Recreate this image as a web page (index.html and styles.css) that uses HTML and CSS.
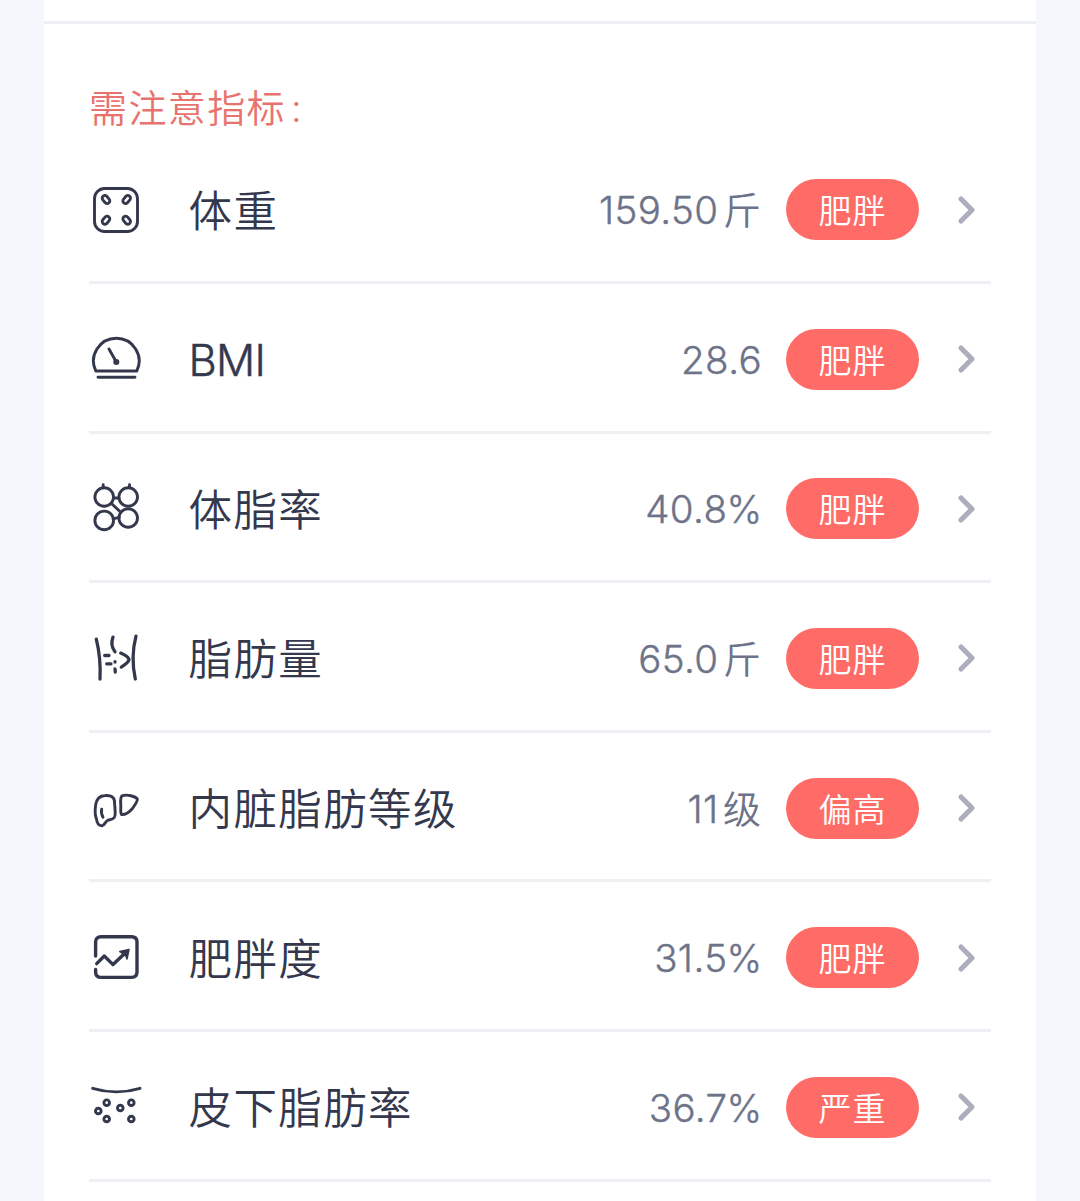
FILE: index.html
```html
<!DOCTYPE html>
<html lang="zh-CN">
<head>
    <meta charset="UTF-8">
    <meta name="viewport" content="width=device-width, initial-scale=1.0">
    <title>需注意指标</title>
    <link rel="stylesheet" href="styles.css">
</head>
<body>
<div class="container">
    <h2 class="title">需注意指标<span class="colon">:</span></h2>
    <ul class="list" id="list"></ul>
</div>

<script src="script.js"></script>
</body>
</html>
```
FILE: styles.css
```css
* {
    box-sizing: border-box;
}
body {
    margin: 0;
    height: 1201px;
    overflow: hidden;
    padding: 21px 44px 0;
    font-family: Inter, "Noto Sans CJK SC", sans-serif;
    background: linear-gradient(to right, #f4f7fc 44px, #ffffff 44px, #ffffff 1036px, #f4f7fc 1036px);
}
.container {
    height: 1180px;
    padding: 0 45px;
    border-top: 3px solid #eeeff3;
}
.title {
    margin: 0;
    padding-top: 55px;
    height: 110.5px;
    font-size: 38px;
    line-height: 58px;
    font-weight: 350;
    letter-spacing: 1.4px;
    color: #e8736e;
}
.colon {
    margin-left: 5px;
}
.list {
    margin: 0;
    padding: 0;
    list-style: none;
}
.item {
    display: flex;
    align-items: center;
    height: 149.6px;
    padding-top: 3.8px;
    border-bottom: 3px solid #eff0f4;
}
.icon {
    width: 54px;
    height: 54px;
    fill: none;
    stroke: #34384d;
    stroke-width: 2.9;
    stroke-linecap: round;
    stroke-linejoin: round;
}
.icon .solid {
    fill: #34384d;
}
.name {
    flex: 1;
    margin-left: 45.5px;
    padding-top: 2px;
    font-size: 43.5px;
    line-height: 60px;
    font-weight: 350;
    letter-spacing: 1.4px;
    color: #34384d;
}
.name.latin {
    font-size: 43.5px;
    font-weight: 300;
    letter-spacing: -0.7px;
    -webkit-text-stroke: 0.5px #34384d;
}
.value {
    display: flex;
    align-items: center;
    margin-right: -1px;
    padding-top: 1px;
    font-size: 38.5px;
    line-height: 58px;
    font-weight: 300;
    letter-spacing: 0.4px;
    color: #6d7389;
    -webkit-text-stroke: 0.4px #6d7389;
}
.unit {
    margin: 0 1px 0 4.5px;
    font-size: 38px;
    font-weight: 350;
    letter-spacing: 0;
    -webkit-text-stroke: 0;
}
.percent {
    margin-left: -1px;
    font-size: 38px;
    letter-spacing: 0;
}
.tag {
    width: 133px;
    height: 61px;
    margin-left: 25px;
    padding-top: 2px;
    border-radius: 31px;
    font-size: 33px;
    line-height: 60px;
    font-weight: 350;
    letter-spacing: 1px;
    text-align: center;
    color: #ffffff;
    background-color: #ff6b66;
}
.arrow {
    width: 20px;
    height: 30px;
    margin: 0 14px 0 38px;
    fill: none;
    stroke: #acaebd;
    stroke-width: 5.2;
    stroke-linecap: round;
    stroke-linejoin: round;
}
```
FILE: script.js
```js
const icons = {
    weight: `<rect x="5.5" y="5.5" width="43" height="43" rx="10"/>
        <rect x="12.6" y="13.8" width="8.8" height="5.4" rx="2.7" transform="rotate(50 17 16.5)"/>
        <rect x="33.3" y="13.8" width="8.8" height="5.4" rx="2.7" transform="rotate(-50 37.7 16.5)"/>
        <rect x="12.6" y="34.5" width="8.8" height="5.4" rx="2.7" transform="rotate(-50 17 37.2)"/>
        <rect x="33.3" y="34.5" width="8.8" height="5.4" rx="2.7" transform="rotate(50 37.7 37.2)"/>`,
    bmi: `<path d="M6.8 39A22.8 22.8 0 1 1 47.8 39ZM9 45.3H46M20 17L27.3 30"/>
        <circle class="solid" cx="27.3" cy="30" r="1.6"/>`,
    fatRate: `<circle cx="15.2" cy="15" r="9.3"/><circle cx="39.2" cy="15" r="9.3"/>
        <circle cx="15.2" cy="38.4" r="9.3"/><circle cx="39.2" cy="36" r="9.3"/>
        <path d="M14.2 2.8V5.5M40.5 2.8V5.5M25 16H30M22.7 21.7L31.5 30M25 36.7L30.3 35.4"/>`,
    fatMass: `<path stroke-width="3.3" d="M7.3 8.1Q12 27 11 48M47 5.1Q41.5 26 46.3 48M24 6.1Q21 14 26 20.8M15.7 24.5H20M17.7 32.8H22M26 30.7V31M26 37.8L26.3 41M31.7 22.1Q40 26 40 28.8Q39 32 32.3 36.1"/>`,
    visceral: `<path d="M16 14.5C22 14 25 16 25.5 20C25.5 24 26 25 26 28C26 31 27 34 25.3 36.5C23.5 39 21 38.5 19 39.2C16.5 40 15.5 44.5 13 44.9C10 44.5 7.8 42 7.5 38C5.5 34 6 29 6.6 24C7.5 18 10.5 14.8 16 14.5ZM12.7 28.2C12 31 12.7 34 14 36.2"/>
        <path d="M33 14.8C38 13 46.5 15.5 48.3 17.8C49 19.5 46 24 43.5 27.5C40.5 31 36 33.8 32.5 33.5C31 31 32 27 31.8 24C31.6 21 31 17 33 14.8Z"/>`,
    obesity: `<path stroke-width="3.4" d="M6.6 25V11.1Q6.6 5.8 12 5.8H42.6Q48 5.8 48 11.1V41.1Q48 46.4 42.6 46.4H12Q6.6 46.4 6.6 41V38.5M7.7 32.6L15.3 25L24 33.6L37 21.3"/>
        <path class="solid" stroke-width="1.5" d="M40 18.6L30.8 20.5L34 22.5L37 25.3L38 28Z"/>`,
    skinFat: `<path d="M3.7 8.3Q27.3 15.5 51 8.3"/>
        <circle cx="17.7" cy="22.7" r="2.8"/><circle cx="42.3" cy="22.7" r="2.8"/>
        <circle cx="31.3" cy="28" r="2.8"/><circle cx="9.3" cy="31" r="2.8"/>
        <circle cx="17.7" cy="39" r="2.8"/><circle cx="42.3" cy="39" r="2.8"/>`
};

const items = [
    { icon: "weight", name: "体重", value: "159.50", unit: "斤", tag: "肥胖" },
    { icon: "bmi", name: "BMI", value: "28.6", unit: "", tag: "肥胖" },
    { icon: "fatRate", name: "体脂率", value: "40.8", unit: "%", tag: "肥胖" },
    { icon: "fatMass", name: "脂肪量", value: "65.0", unit: "斤", tag: "肥胖" },
    { icon: "visceral", name: "内脏脂肪等级", value: "11", unit: "级", tag: "偏高" },
    { icon: "obesity", name: "肥胖度", value: "31.5", unit: "%", tag: "肥胖" },
    { icon: "skinFat", name: "皮下脂肪率", value: "36.7", unit: "%", tag: "严重" }
];

document.getElementById("list").innerHTML = items.map(item => `
    <li class="item">
        <svg class="icon" viewBox="0 0 54 54">${icons[item.icon]}</svg>
        <span class="name${item.name === "BMI" ? " latin" : ""}">${item.name}</span>
        <span class="value">${item.value}${item.unit ? `<span class="${item.unit === "%" ? "percent" : "unit"}">${item.unit}</span>` : ""}</span>
        <span class="tag">${item.tag}</span>
        <svg class="arrow" viewBox="0 0 20 30"><path d="M4 4L15 15L4 26"/></svg>
    </li>`).join("");
```
